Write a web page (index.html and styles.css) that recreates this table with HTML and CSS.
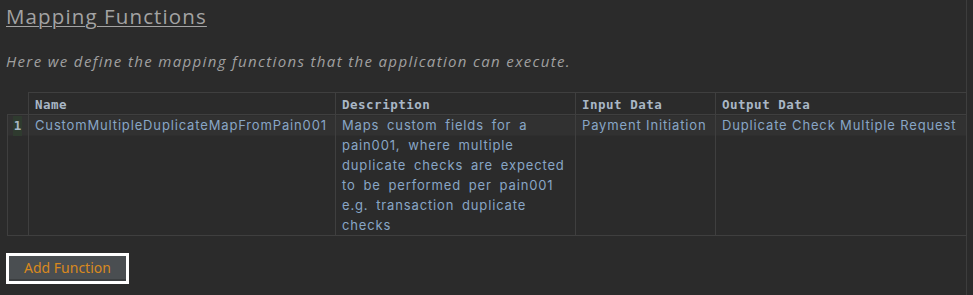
FILE: index.html
```html
<!DOCTYPE html>
<html>
<head>
<meta charset="utf-8">
<link rel="stylesheet" href="styles.css">
</head>
<body>
<div class="panel">
  <h2 class="title">Mapping Functions</h2>
  <p class="intro">Here we define the mapping functions that the application can execute.</p>
  <table class="grid">
    <colgroup>
      <col class="c-num"><col class="c-name"><col class="c-desc"><col class="c-in"><col class="c-out">
    </colgroup>
    <thead>
      <tr>
        <th class="num-head"></th>
        <th>Name</th>
        <th>Description</th>
        <th>Input Data</th>
        <th>Output Data</th>
      </tr>
    </thead>
    <tbody>
      <tr>
        <td class="num"><span class="num-badge">1</span></td>
        <td class="short">CustomMultipleDuplicateMapFromPain001</td>
        <td class="desc">Maps custom fields for a pain001, where multiple duplicate checks are expected to be performed per pain001 e.g. transaction duplicate checks</td>
        <td class="short">Payment Initiation</td>
        <td class="short">Duplicate Check Multiple Request</td>
      </tr>
    </tbody>
  </table>
  <div class="actions">
    <button class="add-btn" type="button">Add Function</button>
  </div>
</div>
</body>
</html>
```
FILE: styles.css
```css
html, body {
  margin: 0;
  padding: 0;
  background: #2b2b2b;
  height: 100%;
}

.panel {
  width: 967px;
  min-height: 295px;
  box-sizing: border-box;
  border-right: 1px solid #3d3d3d;
  padding: 4px 0 0 6px;
}

.title {
  margin: 0;
  font-family: "Open Sans", sans-serif;
  font-weight: 500;
  font-size: 20.5px;
  line-height: 24px;
  letter-spacing: 1.12px;
  color: #a3a3a3;
  text-decoration: underline;
  text-decoration-thickness: 1px;
  text-underline-offset: 2px;
  display: inline-block;
}

.intro {
  margin: 23px 0 0 0;
  font-family: "Open Sans", sans-serif;
  font-style: italic;
  font-size: 15px;
  line-height: 20px;
  letter-spacing: 1.35px;
  color: #a0a0a0;
}

.grid {
  margin: 21px 0 0 1px;
  border-collapse: collapse;
  table-layout: fixed;
  width: 959px;
}

.c-num { width: 21px; }
.c-name { width: 307px; }
.c-desc { width: 240px; }
.c-in { width: 140px; }
.c-out { width: 251px; }

.grid th {
  border: 1px solid #3f3f3f;
  text-align: left;
  padding: 1px 6px 0 6px;
  height: 20px;
  font-family: "DejaVu Sans Mono", monospace;
  font-weight: bold;
  font-size: 12.5px;
  letter-spacing: 0.5px;
  color: #a9b7c6;
}

.grid th.num-head {
  border-top: none;
  border-left: none;
}

.grid td {
  border: 1px solid #3f3f3f;
  vertical-align: top;
  padding: 0 6px;
  font-family: "Inter", sans-serif;
  font-size: 13px;
  line-height: 20px;
  letter-spacing: 0.85px;
  color: #88a6c6;
  background-image: linear-gradient(to bottom, #313131 0, #313131 20px, transparent 20px);
}

.grid td.short {
  white-space: nowrap;
  overflow: hidden;
}

.grid td.desc {
  word-spacing: 3.3px;
}

.grid td.num {
  padding: 0 0 0 5px;
}

.num-badge {
  display: inline-block;
  width: 9px;
  text-align: center;
  background: #2f3b2f;
  font-family: "DejaVu Sans Mono", monospace;
  font-weight: bold;
  font-size: 12.5px;
  color: #a9b7c6;
  letter-spacing: 0;
  line-height: 20px;
}

.actions {
  padding: 17px 0 10px 0;
}

.add-btn {
  border: 3px solid #ffffff;
  background: #4a4e51;
  box-shadow: inset 0 -2px 0 #3b3e40;
  color: #d9891e;
  font-family: "Noto Sans", sans-serif;
  font-size: 14px;
  line-height: 20px;
  padding: 2px 15px 3px 15px;
  margin: 0;
  cursor: pointer;
}
```
